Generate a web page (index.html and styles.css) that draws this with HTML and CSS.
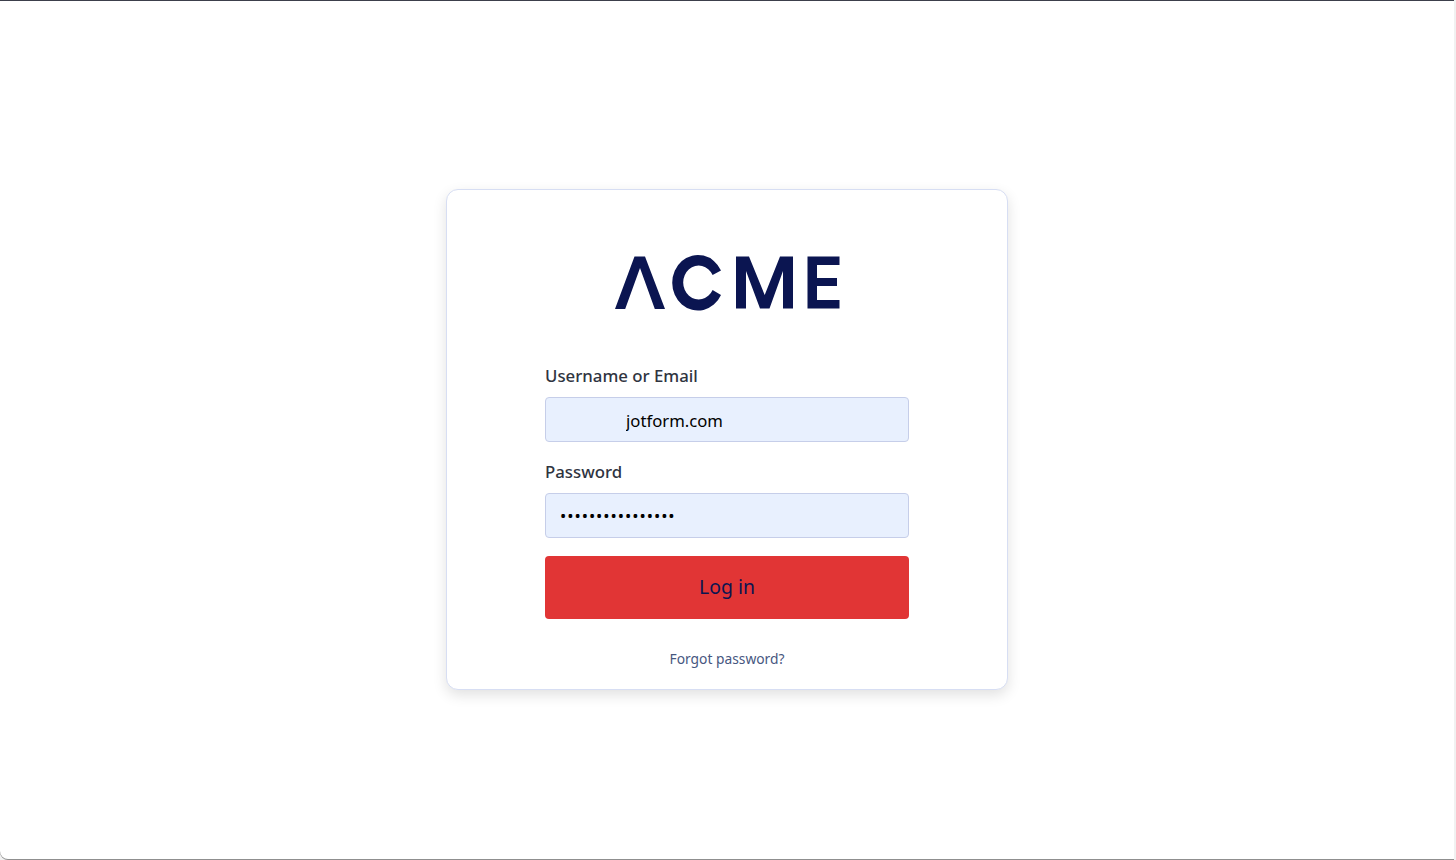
FILE: index.html
```html
<!DOCTYPE html>
<html lang="en">
<head>
    <meta charset="UTF-8">
    <meta name="viewport" content="width=device-width, initial-scale=1.0">
    <title>Log in</title>
    <link rel="stylesheet" href="styles.css">
</head>
<body>

    <div class="page">
        <main class="login-card">
            <div class="logo">
                <svg width="226" height="58" viewBox="614 254 226 58" role="img" aria-label="ACME">
                    <path d="M615 309 L634.500 256.500 H645 L665 309 H654.800 L640 268 L625.200 309 Z"/>
                    <path d="M721 270.500 A25.700 27.800 0 1 0 721 295 L712.600 290 A15.500 17 0 1 1 712.600 275 Z"/>
                    <path d="M736 256.500 H749 L764.700 295 L780 256.500 H793 V308.500 H783 V271 L769.500 308.500 H760 L746 271 V308.500 H736 Z"/>
                    <path d="M807.500 256.500 H839.500 V265 H817 V278 H837 V286 H817 V300 H839.500 V308.500 H807.500 Z"/>
                </svg>
            </div>

            <form class="login-form">
                <label class="field-label" for="username">Username or Email</label>
                <input class="field-input field-username" id="username" type="text" value="jotform.com">

                <label class="field-label" for="password">Password</label>
                <input class="field-input field-password" id="password" type="password" value="aaaaaaaaaaaaaaaa">

                <button class="login-btn" type="button">Log in</button>
            </form>

            <a class="forgot-link" href="#">Forgot password?</a>
        </main>
    </div>

</body>
</html>
```

FILE: styles.css
```css
* {
    margin: 0;
    padding: 0;
    box-sizing: border-box;
    font-family: 'Noto Sans', 'Open Sans', sans-serif;
}

html, body {
    height: 100%;
    overflow: hidden;
    background: #f1f1f1;
}

/* Window frame around the page */
.page {
    width: 1454px;
    height: 859px;
    padding-top: 188px;
    display: flex;
    flex-direction: column;
    align-items: center;
    background: white;
    border-top: 1px solid #3c3f4b;
    border-bottom-left-radius: 8px;
    box-shadow: 0 1px 0 #8f8f8f;
}

.login-card {
    width: 562px;
    height: 501px;
    padding: 64px 98px 0;
    display: flex;
    flex-direction: column;
    align-items: center;
    background: white;
    border: 1px solid #d7def3;
    border-radius: 12px;
    box-shadow: 0 5px 14px rgba(0, 0, 0, 0.12);
}

.logo {
    height: 58px;
    margin-bottom: 51px;
}

.logo svg {
    display: block;
}

.logo path {
    fill: #0b1551;
}

.login-form {
    width: 364px;
    display: flex;
    flex-direction: column;
}

.field-label {
    height: 27px;
    font-size: 16.8px;
    line-height: 25px;
    font-weight: 500;
    color: #2f343f;
    margin-bottom: 7px;
}

.field-input {
    width: 100%;
    height: 45px;
    padding: 0 15px;
    margin-bottom: 17px;
    font-size: 16.7px;
    color: black;
    background: #e8f0fe;
    border: 1px solid #c6cee9;
    border-radius: 4px;
    outline: none;
}

.field-username {
    padding-left: 80px;
    padding-top: 2px;
}

.field-password {
    padding-left: 14px;
    letter-spacing: 0.95px;
}

.login-btn {
    width: 100%;
    height: 63px;
    margin-top: 1px;
    padding-bottom: 2px;
    font-size: 19.4px;
    color: #0b1551;
    background: #e13535;
    border: none;
    border-radius: 4px;
    cursor: pointer;
}

.forgot-link {
    margin-top: 30px;
    font-size: 13.8px;
    line-height: 20px;
    color: #47577f;
    text-decoration: none;
}
```
